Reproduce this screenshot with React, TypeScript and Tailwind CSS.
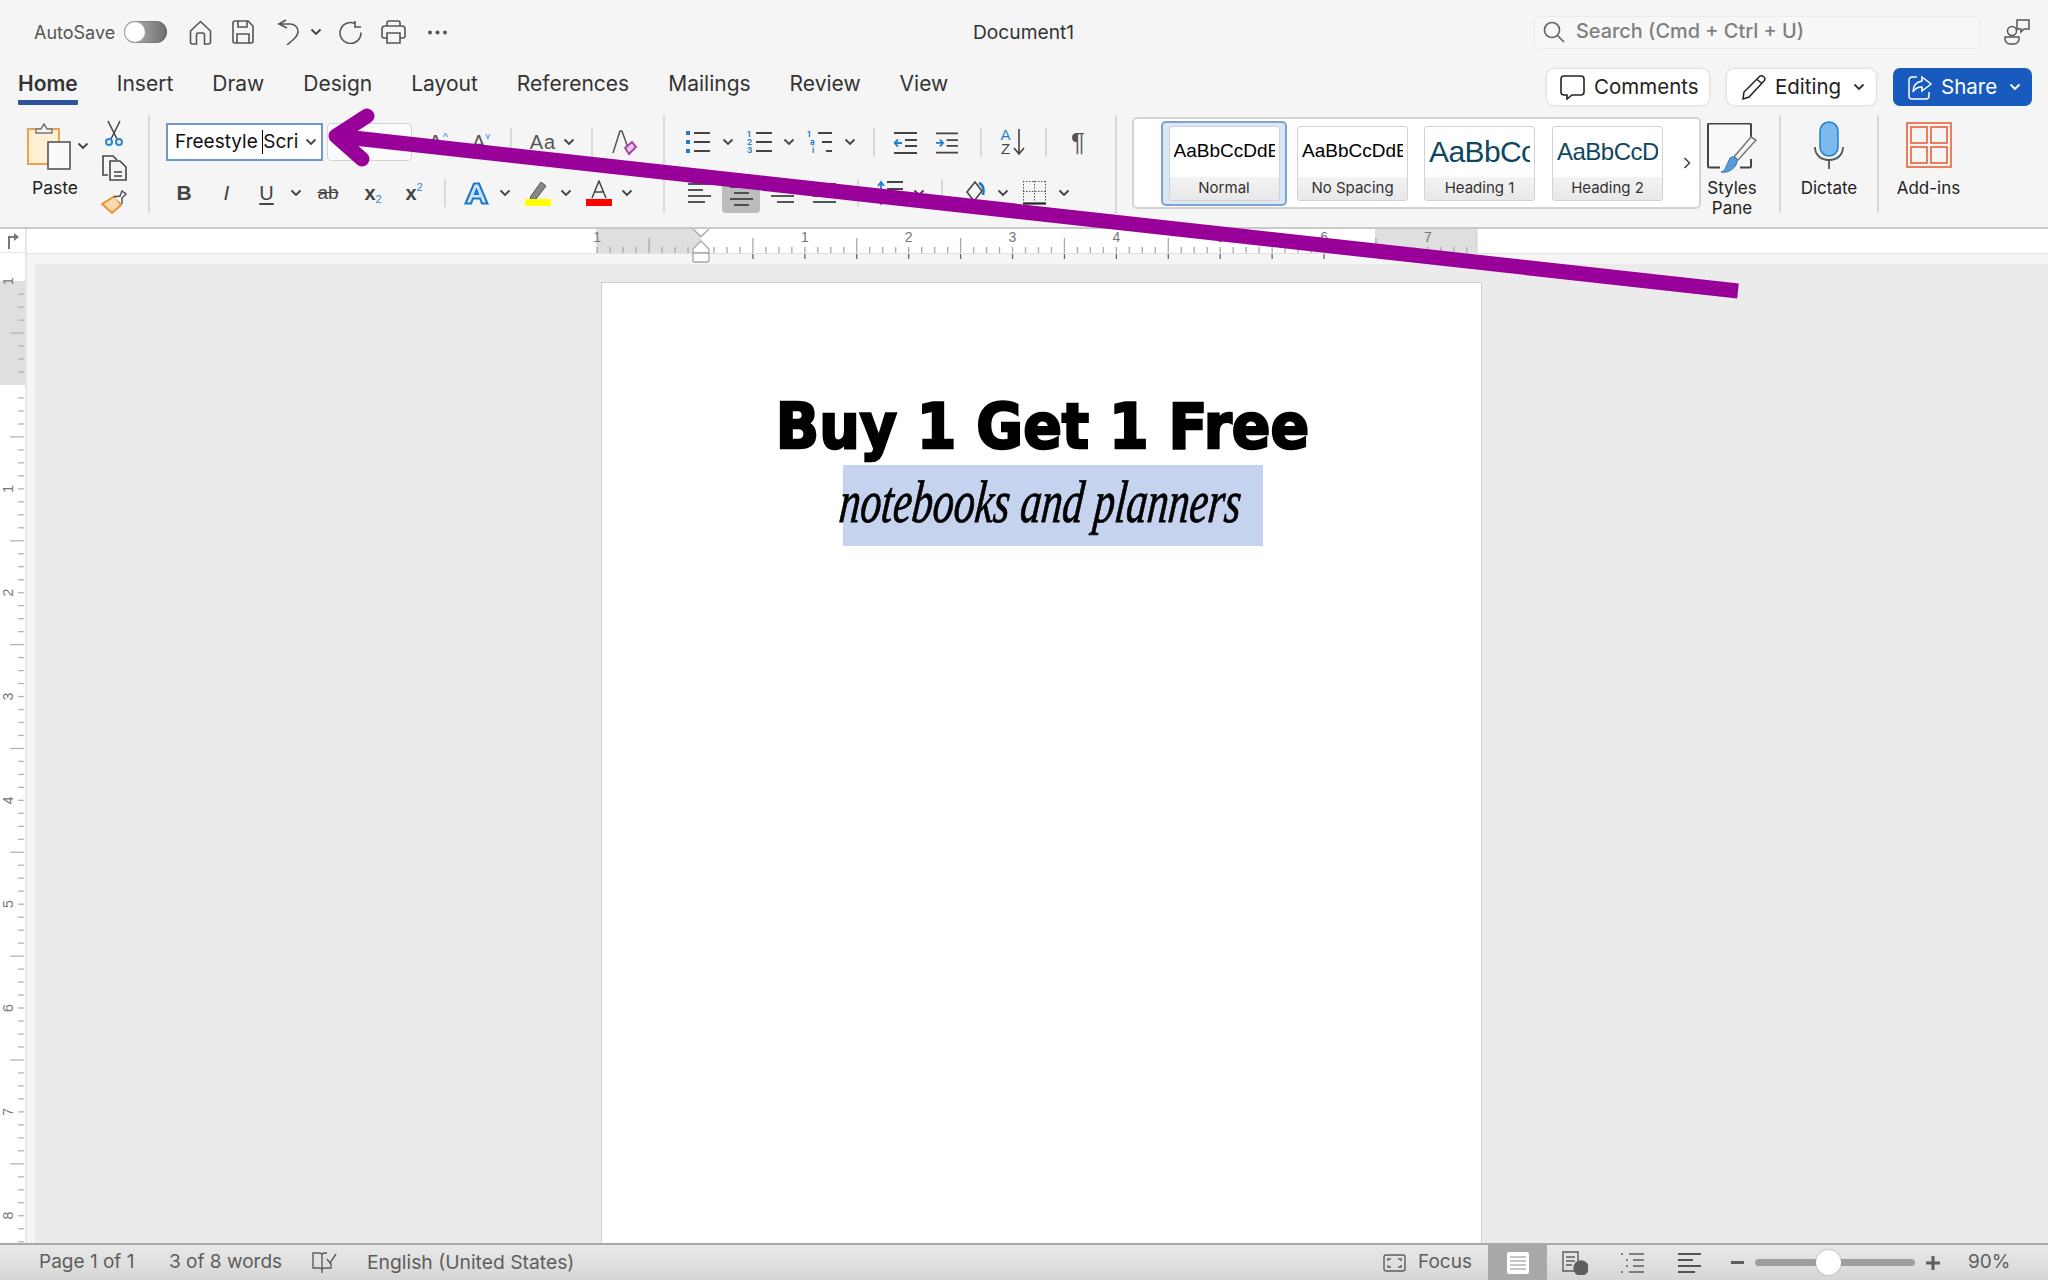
import type { JSX, ReactNode } from 'react';

const ui = "font-['Inter','Liberation_Sans',sans-serif]";

function Chev({ className = '', color = '#444' }: { className?: string; color?: string }): JSX.Element {
  return (
    <svg viewBox="0 0 12 8" className={`h-[8px] w-[12px] shrink-0 ${className}`} fill="none" stroke={color} strokeWidth="1.9">
      <path d="M1.5 1.5 6 6l4.500-4.500" />
    </svg>
  );
}

function Sep({ className = '' }: { className?: string }): JSX.Element {
  return <div className={`w-[2px] shrink-0 bg-[#dadada] ${className}`} />;
}

function Lines({ rows, className = '' }: { rows: [number, number][]; className?: string }): JSX.Element {
  return (
    <svg viewBox="0 0 23 22" className={`h-[22px] w-[23px] shrink-0 ${className}`} stroke="#444" strokeWidth="1.8">
      {rows.map(([a, b], i) => (
        <path key={i} d={`M${a} ${2 + i * 6}H${b}`} />
      ))}
    </svg>
  );
}

function StyleCard({ sample, label, sampleClass, className = '' }: { sample: string; label: string; sampleClass: string; className?: string }): JSX.Element {
  return (
    <div className={`flex h-[75px] w-[111px] shrink-0 flex-col overflow-hidden rounded-[3px] border border-[#d2d2d2] bg-white ${className}`}>
      <div className={`flex h-[50px] shrink-0 items-center pl-[4px] pr-[4px] font-['Liberation_Sans',sans-serif] ${sampleClass}`}>
        <span className="block overflow-hidden whitespace-nowrap">{sample}</span>
      </div>
      <div className="flex flex-1 items-center justify-center bg-linear-to-b from-[#f3f3f3] to-[#e8e8e8] text-[15px] text-[#333]">{label}</div>
    </div>
  );
}

function TextIcon({ children, className }: { children: ReactNode; className: string }): JSX.Element {
  return <span className={`flex shrink-0 items-center justify-center font-['Liberation_Sans',sans-serif] text-[#444] ${className}`}>{children}</span>;
}

function HRuler(): JSX.Element {
  const ticks = [];
  for (let n = -8; n <= 59; n++) {
    const x = 701 + n * 12.98;
    if (n % 8 === 0) {
      const label = Math.abs(n / 8);
      if (n !== 0) ticks.push(<text key={`t${n}`} x={x} y={13} fontSize="14" textAnchor="middle" fill="#777" fontFamily="Liberation Sans">{label}</text>);
    }
    const long = n % 4 === 0 && n % 8 !== 0;
    if (n !== 0) ticks.push(<path key={n} d={`M${x} ${long ? 9 : 18}V24`} stroke="#aaa" strokeWidth="1.300" />);
    if (n % 4 === 0 && n > 0 && x < 1375) ticks.push(<path key={`s${n}`} d={`M${x} 25V30`} stroke="#666" strokeWidth="1.300" />);
  }
  return (
    <svg viewBox="27 0 2021 35" className="h-[35px] w-[2021px] shrink-0">
      <rect x="27" y="0" width="2021" height="35" fill="#f5f5f5" />
      <rect x="27" y="0" width="2021" height="24" fill="#fff" />
      <rect x="597" y="0" width="104" height="24" fill="#dfdfdf" />
      <rect x="1375" y="0" width="102" height="24" fill="#dfdfdf" />
      <path d="M27 24.500H2048" stroke="#e2e2e2" />
      <path d="M597 0V24M1477 0V24" stroke="#cfcfcf" />
      {ticks}
      <g fill="#fff" stroke="#a8a8a8" strokeWidth="1.300">
        <path d="M693 0 701 7.500 709 0" />
        <path d="M701 12 693 20V24H709V20Z" />
        <rect x="693" y="24" width="16" height="9" rx="2" />
      </g>
    </svg>
  );
}

function VRuler(): JSX.Element {
  const items = [];
  for (let n = -8; n <= 66; n++) {
    const y = 132 + n * 12.98;
    if (n % 8 === 0 && n !== 0) {
      const label = Math.abs(n / 8);
      items.push(<text key={`t${n}`} x={0} y={0} transform={`translate(13 ${y}) rotate(-90)`} fontSize="14" textAnchor="middle" fill="#777" fontFamily="Liberation Sans">{label}</text>);
    }
    const long = n % 4 === 0 && n % 8 !== 0;
    if (n % 8 !== 0 || n > 0) items.push(<path key={n} d={`M${long ? 10 : 18} ${y}H24`} stroke="#b5b5b5" strokeWidth="1.300" />);
  }
  return (
    <svg viewBox="0 0 25 990" className="h-[990px] w-[25px]">
      <rect width="25" height="990" fill="#fff" />
      <rect y="28" width="25" height="104" fill="#dfdfdf" />
      {items}
    </svg>
  );
}

export default function App(): JSX.Element {
  return (
    <div className={`relative flex h-[1280px] w-[2048px] flex-col overflow-hidden bg-[#f5f5f5] ${ui}`}>
      {/* Title bar */}
      <div className="flex h-[60px] shrink-0 items-center pt-[4px]">
        <span className="ml-[34px] w-[80px] whitespace-nowrap text-[18px] text-[#555]">AutoSave</span>
        <div className="ml-[10px] flex h-[22px] w-[43px] items-center rounded-full bg-linear-to-r from-[#c4c4c4] to-[#6e6e6e] shadow-[inset_0_0_2px_#555]">
          <div className="ml-[1px] h-[20px] w-[20px] rounded-full bg-white" />
        </div>
        <svg viewBox="0 0 23 25" className="ml-[22px] h-[25px] w-[23px]" fill="none" stroke="#555" strokeWidth="1.600">
          <path d="M1.500 11 11.500 1.500 21.500 11V22a2 2 0 0 1-2 2H15.500V15a2 2 0 0 0-2-2H9.500a2 2 0 0 0-2 2v9H3.500a2 2 0 0 1-2-2Z" />
        </svg>
        <svg viewBox="0 0 22 24" className="ml-[20px] h-[24px] w-[22px]" fill="none" stroke="#555" strokeWidth="1.600">
          <path d="M3 1h13l5 5v15a2 2 0 0 1-2 2H3a2 2 0 0 1-2-2V3a2 2 0 0 1 2-2ZM6 1v6h9V1M5 23v-9h12v9" />
        </svg>
        <svg viewBox="0 0 23 26" className="ml-[23px] h-[26px] w-[23px]" fill="none" stroke="#555" strokeWidth="1.600">
          <path d="M9 1 2 5v0l8 4M2 5h11c5 0 8 3.500 8 7.500 0 3-2 5.500-4 7.500l-7 6" />
        </svg>
        <Chev className="ml-[10px]" />
        <svg viewBox="0 0 23 24" className="ml-[17px] h-[24px] w-[23px]" fill="none" stroke="#555" strokeWidth="1.600">
          <path d="M16 3.500A10.500 10.500 0 1 0 22 12.500M16 1v6h6" />
        </svg>
        <svg viewBox="0 0 25 24" className="ml-[19px] h-[24px] w-[25px]" fill="none" stroke="#555" strokeWidth="1.600">
          <path d="M6 6V3a2 2 0 0 1 2-2h9a2 2 0 0 1 2 2v3M6 18H3a2 2 0 0 1-2-2V9a3 3 0 0 1 3-3h17a3 3 0 0 1 3 3v7a2 2 0 0 1-2 2h-3M6 13h13v10H6Z" />
        </svg>
        <svg viewBox="0 0 21 5" className="ml-[21px] h-[5px] w-[21px]" fill="#555">
          <circle cx="3" cy="2.500" r="2" />
          <circle cx="10.500" cy="2.500" r="2" />
          <circle cx="18" cy="2.500" r="2" />
        </svg>
        <span className="ml-[525px] w-[101px] whitespace-nowrap text-[19.200px] text-[#333]">Document1</span>
        <div className="ml-[460px] flex h-[33px] w-[446px] items-center rounded-[6px] border border-[#ebebeb] bg-[#f7f7f7]">
          <svg viewBox="0 0 22 22" className="ml-[8px] h-[22px] w-[22px]" fill="none" stroke="#666" strokeWidth="1.700">
            <circle cx="9" cy="9" r="7.500" />
            <path d="m14.500 14.500 6.500 6.500" />
          </svg>
          <span className="ml-[11px] whitespace-nowrap text-[19.900px] font-medium text-[#7f7f7f]">Search (Cmd + Ctrl + U)</span>
        </div>
        <svg viewBox="0 0 26 26" className="ml-[24px] h-[26px] w-[26px]" fill="none" stroke="#555" strokeWidth="1.500">
          <circle cx="8" cy="12" r="4.500" />
          <path d="M1 18h14v2a5 5 0 0 1-5 5H6a5 5 0 0 1-5-5ZM13 1h12v9h-5l-3 3v-3h-4Z" />
        </svg>
      </div>

      {/* Tabs */}
      <div className="flex h-[50px] shrink-0 items-start">
        <div className="ml-[18px] flex gap-[39px] text-[21px] text-[#333]">
          <div className="h-[45px] rounded-[1px] border-b-[5px] border-[#2b579a] pt-[8px] font-semibold">Home</div>
          <div className="h-[45px] pt-[8px]">Insert</div>
          <div className="h-[45px] pt-[8px]">Draw</div>
          <div className="h-[45px] pt-[8px]">Design</div>
          <div className="h-[45px] pt-[8px]">Layout</div>
          <div className="h-[45px] pt-[8px]">References</div>
          <div className="h-[45px] pt-[8px]">Mailings</div>
          <div className="h-[45px] pt-[8px]">Review</div>
          <div className="h-[45px] pt-[8px]">View</div>
        </div>
        <div className="ml-auto mt-[8px] flex items-center pr-[16px]">
          <div className="flex h-[36px] w-[162px] items-center rounded-[7px] bg-white pl-[13px] text-[20.500px] text-[#222] shadow-[0_0_3px_#c4c4c4]">
            <svg viewBox="0 0 25 25" className="h-[25px] w-[25px]" fill="none" stroke="#222" strokeWidth="1.600">
              <path d="M4 1h17a3 3 0 0 1 3 3v13a3 3 0 0 1-3 3H12l-5 4v-4H4a3 3 0 0 1-3-3V4a3 3 0 0 1 3-3Z" />
            </svg>
            <span className="ml-[9px]">Comments</span>
          </div>
          <div className="ml-[18px] flex h-[36px] w-[149px] items-center rounded-[7px] bg-white pl-[14px] text-[20.500px] text-[#222] shadow-[0_0_3px_#c4c4c4]">
            <svg viewBox="0 0 25 25" className="h-[25px] w-[25px]" fill="none" stroke="#222" strokeWidth="1.500">
              <path d="M18 2a3 3 0 0 1 5 4L8 22l-6 2 1-7ZM16 4.500l5 4" />
            </svg>
            <span className="ml-[9px]">Editing</span>
            <Chev className="ml-[12px]" color="#333" />
          </div>
          <div className="ml-[17px] flex h-[38px] w-[139px] items-center rounded-[7px] bg-[#185abd] pl-[15px] text-[20.500px] text-white">
            <svg viewBox="0 0 25 25" className="h-[25px] w-[25px]" fill="none" stroke="#fff" strokeWidth="1.500">
              <path d="M9 2H4a3 3 0 0 0-3 3v16a3 3 0 0 0 3 3h14a3 3 0 0 0 3-3v-4M14 2l9 7-9 7v-4c-4 0-7 1-9 5 0-6 3-10 9-11Z" />
            </svg>
            <span className="ml-[8px]">Share</span>
            <Chev className="ml-[12px]" color="#fff" />
          </div>
        </div>
      </div>

      {/* Ribbon */}
      <div className="flex h-[119px] shrink-0 items-start border-b-2 border-[#c9c9c9] pt-[5px]">
        {/* Clipboard */}
        <div className="flex h-[98px] w-[148px] shrink-0 items-start pl-[27px] pt-[8px]">
          <div className="flex w-[56px] flex-col items-center">
            <svg viewBox="0 0 44 47" className="h-[47px] w-[44px] self-start">
              <path d="M1 6h31v35H1Z" fill="#fdf0d5" stroke="#f0a24a" strokeWidth="2" />
              <path d="M9 10V6h5l3-5 3 5h5v4Z" fill="#f5f5f5" stroke="#777" strokeWidth="1.500" />
              <rect x="21" y="19" width="22" height="27" fill="#fafafa" stroke="#555" strokeWidth="1.600" />
            </svg>
            <span className="mt-[8px] text-[17.500px] leading-[20px] text-[#222]">Paste</span>
          </div>
          <Chev className="mt-[19px] -ml-[6px]" />
          <div className="ml-[12px] flex flex-col items-center">
            <svg viewBox="0 0 18 27" className="-mt-[3px] h-[27px] w-[18px]" fill="none">
              <path d="M3 1l9 18M15 1 6 19" stroke="#444" strokeWidth="1.500" />
              <circle cx="4" cy="22" r="3" stroke="#2b88d8" strokeWidth="2" />
              <circle cx="14" cy="22" r="3" stroke="#2b88d8" strokeWidth="2" />
            </svg>
            <svg viewBox="0 0 26 26" className="mt-[8px] h-[26px] w-[26px]" fill="#f5f5f5" stroke="#444" strokeWidth="1.600">
              <path d="M7 20H2V1h10l4 4" />
              <path d="M9 6h10l6 6v13H9ZM13 17h8M13 21h8" />
            </svg>
            <svg viewBox="0 0 26 24" className="mt-[9px] h-[24px] w-[26px]" fill="none">
              <path d="M1 14 14 6l6 9-9 8Z" fill="#fcdcae" stroke="#ed8b2d" strokeWidth="1.800" />
              <path d="M13 7l6-1 2-5 4 3-4 4 0 6" fill="#f5f5f5" stroke="#555" strokeWidth="1.500" />
            </svg>
          </div>
        </div>
        <Sep className="h-[98px]" />

        {/* Font */}
        <div className="flex h-[98px] w-[513px] shrink-0 flex-col pt-[8px]">
          <div className="flex h-[38px] items-center">
            <div className="ml-[16px] flex h-[38px] w-[157px] items-center border-2 border-[#7097cc] bg-white pl-[7px] text-[19px] text-[#111]">
              <span className="whitespace-nowrap">Freestyle </span>
              <span className="ml-[4px] h-[24px] w-[1.500px] bg-black" />
              <span>Scri</span>
              <Chev className="ml-auto mr-[4px]" />
            </div>
            <div className="ml-[4px] h-[38px] w-[85px] rounded-[4px] border border-[#d4d4d4] bg-[#fbfbfb]" />
            <TextIcon className="ml-[16px] h-[24px] w-[20px] text-[22px] text-[#555]">
              A<span className="-mt-[10px] text-[11px] text-[#2b88d8]">^</span>
            </TextIcon>
            <TextIcon className="ml-[23px] h-[24px] w-[20px] text-[20px] text-[#555]">
              A<span className="-mt-[10px] text-[9px] text-[#2b88d8]">v</span>
            </TextIcon>
            <Sep className="ml-[19px] h-[29px]" />
            <TextIcon className="ml-[18px] h-[24px] w-[26px] text-[20px] tracking-[1px] text-[#555]">Aa</TextIcon>
            <Chev className="ml-[7px]" />
            <Sep className="ml-[16px] h-[29px]" />
            <svg viewBox="0 0 25 27" className="ml-[19px] h-[27px] w-[25px]" fill="none">
              <path d="M1 24 8 2h2l6 17" stroke="#555" strokeWidth="1.500" />
              <path d="M13 19l7-6 4 5-7 7Z" fill="#e7c4ea" stroke="#a33ba8" strokeWidth="1.800" />
            </svg>
          </div>
          <div className="mt-[15px] flex h-[34px] items-center">
            <TextIcon className="ml-[28px] w-[12px] text-[21px] font-bold">B</TextIcon>
            <TextIcon className="ml-[31px] w-[11px] text-[21px] italic">I</TextIcon>
            <TextIcon className="ml-[27px] w-[15px] text-[20px] underline underline-offset-[3px]">U</TextIcon>
            <Chev className="ml-[16px]" />
            <TextIcon className="ml-[13px] w-[26px] text-[19px] line-through">ab</TextIcon>
            <TextIcon className="ml-[23px] w-[18px] text-[20px] font-bold">
              x<span className="mt-[12px] text-[11px] font-normal text-[#2b88d8]">2</span>
            </TextIcon>
            <TextIcon className="ml-[23px] w-[18px] text-[20px] font-bold">
              x<span className="-mt-[12px] text-[11px] font-normal text-[#2b88d8]">2</span>
            </TextIcon>
            <Sep className="ml-[21px] h-[28px]" />
            <svg viewBox="0 0 25 23" className="ml-[18px] h-[23px] w-[25px]">
              <path d="M1.500 21.500 10 1.500h5l8.500 20H18l-2-5H9l-2 5ZM11 12h3l-1.500-4Z" fill="#c9e2f7" stroke="#1b78c4" strokeWidth="2" />
            </svg>
            <Chev className="ml-[10px]" />
            <svg viewBox="0 0 26 26" className="ml-[14px] h-[26px] w-[26px]">
              <path d="M6 16 16 2l5 4-10 13-6 1Z" fill="#888" stroke="#555" />
              <rect y="19" width="26" height="7" fill="#ffff00" />
            </svg>
            <Chev className="ml-[9px]" />
            <svg viewBox="0 0 26 26" className="ml-[14px] h-[26px] w-[26px]">
              <path d="M6 18 13 1l7 17M8.500 12h9" fill="none" stroke="#444" strokeWidth="1.500" />
              <rect y="19" width="26" height="7" fill="#f00" />
            </svg>
            <Chev className="ml-[9px]" />
          </div>
        </div>
        <Sep className="h-[98px]" />

        {/* Paragraph */}
        <div className="flex h-[98px] w-[450px] shrink-0 flex-col pt-[8px]">
          <div className="flex h-[38px] items-center">
            <svg viewBox="0 0 24 23" className="ml-[21px] h-[23px] w-[24px]">
              <path d="M0 0h4v4H0ZM0 9h4v4H0ZM0 18h4v4H0Z" fill="#1f7fcf" />
              <path d="M8 2h16M8 11h16M8 20h16" stroke="#444" strokeWidth="1.800" />
            </svg>
            <Chev className="ml-[12px]" />
            <div className="ml-[13px] flex h-[23px] w-[25px] items-center">
              <span className="flex w-[8px] flex-col text-[8px] font-bold leading-[8px] text-[#1f7fcf]">
                <span>1</span>
                <span>2</span>
                <span>3</span>
              </span>
              <svg viewBox="0 0 16 23" className="ml-[1px] h-[23px] w-[16px]">
                <path d="M0 2h16M0 11h16M0 20h16" stroke="#444" strokeWidth="1.800" />
              </svg>
            </div>
            <Chev className="ml-[11px]" />
            <div className="ml-[12px] flex h-[23px] w-[25px] items-center">
              <span className="flex w-[9px] flex-col text-[8px] font-bold leading-[8px] text-[#1f7fcf]">
                <span>1</span>
                <span className="pl-[3px]">a</span>
                <span className="pl-[5px]">i</span>
              </span>
              <svg viewBox="0 0 16 23" className="h-[23px] w-[16px]">
                <path d="M2 2h14M6 11h10M10 20h6" stroke="#444" strokeWidth="1.800" />
              </svg>
            </div>
            <Chev className="ml-[12px]" />
            <Sep className="ml-[17px] h-[29px]" />
            <svg viewBox="0 0 23 23" className="ml-[19px] h-[23px] w-[23px]" fill="none">
              <path d="M0 2h23M11 9h12M11 15h12M0 22h23" stroke="#444" strokeWidth="1.800" />
              <path d="M8 12H1m3-3.500L.500 12 4 15.500" stroke="#1f7fcf" strokeWidth="1.800" />
            </svg>
            <svg viewBox="0 0 23 23" className="ml-[19px] h-[23px] w-[22px]" fill="none">
              <path d="M0 2h23M11 9h12M11 15h12M0 22h23" stroke="#444" strokeWidth="1.800" />
              <path d="M0 12h7M4 8.500 7.500 12 4 15.500" stroke="#1f7fcf" strokeWidth="1.800" />
            </svg>
            <Sep className="ml-[22px] h-[29px]" />
            <div className="ml-[17px] flex h-[27px] w-[27px] items-center">
              <span className="flex w-[13px] flex-col text-center text-[15px] leading-[14px] font-['Liberation_Sans',sans-serif]">
                <span className="text-[#1f7fcf]">A</span>
                <span className="text-[#444]">Z</span>
              </span>
              <svg viewBox="0 0 12 26" className="ml-[1px] h-[26px] w-[12px]" fill="none" stroke="#444" strokeWidth="1.600">
                <path d="M6 0v25M1 19l5 6 5-6" />
              </svg>
            </div>
            <Sep className="ml-[19px] h-[29px]" />
            <span className="ml-[23px] w-[16px] text-center font-['Liberation_Sans',sans-serif] text-[26px] leading-[26px] text-[#555]">¶</span>
          </div>
          <div className="mt-[15px] flex h-[34px] items-center">
            <Lines className="ml-[23px]" rows={[[0, 23], [0, 15], [0, 23], [0, 17]]} />
            <div className="ml-[11px] flex h-[37px] w-[38px] shrink-0 items-center justify-center self-start rounded-[4px] bg-[#bcbcbc] pt-[3px]">
              <Lines rows={[[0, 23], [4, 19], [0, 23], [4, 19]]} />
            </div>
            <Lines className="ml-[11px]" rows={[[0, 23], [8, 23], [0, 23], [6, 23]]} />
            <Lines className="ml-[19px]" rows={[[0, 23], [0, 23], [0, 23], [0, 23]]} />
            <Sep className="ml-[21px] h-[28px]" />
            <svg viewBox="0 0 26 26" className="ml-[18px] h-[26px] w-[26px]" fill="none">
              <path d="M10 2h16M10 9h16M10 16h16M10 23h16" stroke="#444" strokeWidth="1.800" />
              <path d="M4 2v22M1 6l3-4 3 4M1 20l3 4 3-4" stroke="#1f7fcf" strokeWidth="1.800" />
            </svg>
            <Chev className="ml-[10px]" />
            <Sep className="ml-[16px] h-[28px]" />
            <svg viewBox="0 0 20 26" className="ml-[23px] h-[26px] w-[20px]" fill="none">
              <path d="M1 12 9 2l7 9-8 10Z" stroke="#444" strokeWidth="1.600" />
              <path d="M13 3c5 2 5 7 4 12" stroke="#1b78c4" strokeWidth="2.500" />
            </svg>
            <Chev className="ml-[11px]" />
            <svg viewBox="0 0 23 24" className="ml-[14px] h-[24px] w-[23px]" fill="none">
              <path d="M0 .500h23M.500 0v21M22.500 0v21M0 10.500h23M11.500 0v21" stroke="#555" strokeDasharray="1.500 1.500" />
              <path d="M0 22.500h23" stroke="#222" strokeWidth="2.200" />
            </svg>
            <Chev className="ml-[12px]" />
          </div>
        </div>
        <Sep className="h-[98px]" />

        {/* Styles gallery */}
        <div className="ml-[15px] mt-[2px] flex h-[92px] w-[569px] shrink-0 items-center rounded-[5px] border-2 border-[#d4d4d4] bg-white pl-[27px]">
          <div className="flex h-[85px] w-[126px] shrink-0 items-center justify-center rounded-[5px] border-2 border-[#7ea3d3] bg-[#dbe7f5]">
            <StyleCard sample="AaBbCcDdEe" label="Normal" sampleClass="text-[19px] text-black" />
          </div>
          <StyleCard className="ml-[10px]" sample="AaBbCcDdEe" label="No Spacing" sampleClass="text-[19px] text-black" />
          <StyleCard className="ml-[16px]" sample="AaBbCcDd" label="Heading 1" sampleClass="text-[30px] tracking-[-0.6px] text-[#0f4761]" />
          <StyleCard className="ml-[17px]" sample="AaBbCcDdEe" label="Heading 2" sampleClass="text-[24px] tracking-[-0.5px] text-[#0f4761]" />
          <svg viewBox="0 0 8 12" className="ml-[20px] h-[12px] w-[8px]" fill="none" stroke="#444" strokeWidth="1.600">
            <path d="M1.500 1 6.500 6l-5 5" />
          </svg>
        </div>

        {/* Right-hand commands */}
        <div className="flex h-[98px] w-[62px] shrink-0 flex-col items-center pt-[8px] text-[17px] leading-[20px] text-[#222]">
          <svg viewBox="0 0 50 50" className="h-[50px] w-[50px] shrink-0" fill="none">
            <path d="M44 17V2a1.500 1.500 0 0 0-1.500-1.500H2.500A1.500 1.500 0 0 0 1 2v41a1.500 1.500 0 0 0 1.500 1.500H13M33 44.500h9.500a1.500 1.500 0 0 0 1.500-1.500V36" fill="#fafafa" stroke="#444" strokeWidth="2" />
            <path d="M49 17 31 37l-4-3 17-20Z" fill="#f5f5f5" stroke="#777" strokeWidth="1.500" />
            <path d="M14 49c4 0 5-6 9-14 2-2 6-1 7 2 1 6-8 14-16 12Z" fill="#5b9bd5" stroke="#2b78c4" />
          </svg>
          <span className="mt-[5px] shrink-0">Styles</span>
          <span className="shrink-0">Pane</span>
        </div>
        <Sep className="ml-[16px] h-[98px]" />
        <div className="flex h-[98px] w-[96px] shrink-0 flex-col items-center pt-[6px] text-[17px] leading-[20px] text-[#222]">
          <svg viewBox="0 0 32 48" className="h-[48px] w-[32px]" fill="none">
            <rect x="7" y="1" width="18" height="34" rx="9" fill="#7cb9ec" stroke="#1f7fcf" strokeWidth="1.500" />
            <path d="M2 26c0 8 6 13 14 13s14-5 14-13M16 39v9" stroke="#555" strokeWidth="1.800" />
          </svg>
          <span className="mt-[9px]">Dictate</span>
        </div>
        <Sep className="h-[98px]" />
        <div className="flex h-[98px] w-[99px] shrink-0 flex-col items-center pt-[7px] text-[17px] leading-[20px] text-[#222]">
          <svg viewBox="0 0 46 46" className="h-[46px] w-[46px]" fill="none" stroke="#e8623a" strokeWidth="1.600">
            <rect x="1" y="1" width="44" height="44" />
            <rect x="5" y="5" width="16" height="16" />
            <rect x="25" y="5" width="16" height="16" />
            <rect x="5" y="25" width="16" height="16" />
            <rect x="25" y="25" width="16" height="16" />
          </svg>
          <span className="mt-[10px]">Add-ins</span>
        </div>
      </div>

      {/* Rulers and document */}
      <div className="flex min-h-0 flex-1">
        <div className="flex w-[27px] shrink-0 flex-col overflow-hidden border-r-2 border-[#e6e6e6] bg-white">
          <div className="flex h-[24px] shrink-0 items-center justify-center border-b border-[#e2e2e2]">
            <svg viewBox="0 0 12 16" className="h-[16px] w-[12px]" fill="none" stroke="#777" strokeWidth="2">
              <path d="M2 16V4h6" />
              <path d="M7 0l5 4-5 4Z" fill="#777" stroke="none" />
            </svg>
          </div>
          <VRuler />
        </div>
        <div className="flex min-w-0 flex-1 flex-col">
          <HRuler />
          <div className="flex min-h-0 flex-1 bg-[#f5f5f5] pl-[8px]">
            <div className="min-h-0 flex-1 overflow-hidden bg-[#ebebeb] pl-[566px] pt-[18px]">
              <div className="h-[1000px] w-[881px] border-l border-t border-r border-[#cfcfcf] bg-white pt-[105px] text-black">
                <div className="h-[77px] origin-left scale-x-[0.905] whitespace-nowrap pl-[192px] font-['DejaVu_Sans',sans-serif] text-[63px] font-bold leading-[77px] [-webkit-text-stroke:2.500px_black]">
                  Buy 1 Get 1 Free
                </div>
                <div className="ml-[241px] flex h-[81px] w-[420px] items-start bg-[#c5d3ee]">
                  <span className="-ml-[3px] -mt-[3px] inline-block origin-left -skew-x-[8deg] scale-x-[0.7] whitespace-nowrap font-['Liberation_Serif',serif] text-[60px] italic leading-[81px] [-webkit-text-stroke:0.8px_black]">
                    notebooks and planners
                  </span>
                </div>
              </div>
            </div>
          </div>
        </div>
      </div>

      {/* Status bar */}
      <div className="flex h-[37px] shrink-0 items-center border-t-2 border-[#a9a9a9] bg-linear-to-b from-[#e9e9e9] to-[#d6d6d6] text-[19px] text-[#5e5e5e]">
        <span className="ml-[39px] w-[96px] whitespace-nowrap">Page 1 of 1</span>
        <span className="ml-[34px] w-[112px] whitespace-nowrap">3 of 8 words</span>
        <svg viewBox="0 0 25 22" className="ml-[31px] h-[22px] w-[25px]" fill="none" stroke="#5e5e5e" strokeWidth="1.400">
          <path d="M1 1h6c2 0 3 1 3 2v15c0-1-1-2-3-2H1ZM10 3c0-1 1-2 3-2h2M10 18c0-1 1-2 3-2h6v-5M10 18v3M15 7l3 4 6-9" />
        </svg>
        <span className="ml-[30px] whitespace-nowrap text-[19.300px]">English (United States)</span>
        <div className="ml-auto flex h-full items-center">
          <svg viewBox="0 0 23 18" className="h-[18px] w-[23px]" fill="none" stroke="#5e5e5e" strokeWidth="1.400">
            <rect x="1" y="1" width="21" height="16" rx="2" />
            <path d="M5 7V5h3M15 5h3v2M5 11v2h3M15 13h3v-2" />
          </svg>
          <span className="ml-[12px] w-[53px]">Focus</span>
          <div className="ml-[17px] flex h-full w-[59px] items-center justify-center bg-[#a9a9a9]">
            <svg viewBox="0 0 22 22" className="h-[22px] w-[22px]" fill="#fff" stroke="#8c8c8c">
              <rect x="0.500" y="0.500" width="21" height="21" rx="1" stroke="#fff" />
              <path d="M3 5h16M3 9h16M3 13h16M3 17h16" />
            </svg>
          </div>
          <svg viewBox="0 0 26 24" className="ml-[15px] h-[24px] w-[26px]" fill="none" stroke="#5e5e5e" strokeWidth="1.400">
            <path d="M14 20H1V1h15v9M4 6h9M4 10h9M4 14h6" />
            <circle cx="19" cy="17" r="7" fill="#5e5e5e" />
          </svg>
          <svg viewBox="0 0 23 22" className="ml-[33px] h-[22px] w-[23px]" fill="none" stroke="#5e5e5e" strokeWidth="1.600">
            <path d="M8 2h15M12 8h11M12 14h11M8 20h15" />
            <path d="M0 2h3M5 8h3M5 14h3M0 20h3" strokeDasharray="2 1" />
          </svg>
          <Lines className="ml-[34px]" rows={[[0, 23], [0, 15], [0, 23], [0, 17]]} />
          <svg viewBox="0 0 13 3" className="ml-[30px] h-[3px] w-[13px]" fill="#5e5e5e">
            <rect width="13" height="3" />
          </svg>
          <div className="relative ml-[11px] h-[7px] w-[160px] rounded-full bg-[#9e9e9e]">
            <div className="absolute left-[61px] top-[-9px] h-[25px] w-[25px] rounded-full bg-white shadow-[0_0_2px_#999]" />
          </div>
          <svg viewBox="0 0 14 14" className="ml-[11px] h-[14px] w-[14px]" fill="#5e5e5e">
            <path d="M5.500 0h3v5.500H14v3H8.500V14h-3V8.500H0v-3h5.500Z" />
          </svg>
          <span className="ml-[28px] w-[41px] whitespace-nowrap">90%</span>
          <span className="w-[39px]" />
        </div>
      </div>

      {/* Annotation arrow over the ribbon */}
      <svg viewBox="0 0 2048 1280" className="pointer-events-none absolute left-0 top-0 h-[1280px] w-[2048px]" fill="none" stroke="#990099">
        <path d="M336 136 1738 291" strokeWidth="15" />
        <path d="M367 116 336 136 362 159" strokeWidth="15" strokeLinecap="round" strokeLinejoin="round" />
      </svg>
    </div>
  );
}
